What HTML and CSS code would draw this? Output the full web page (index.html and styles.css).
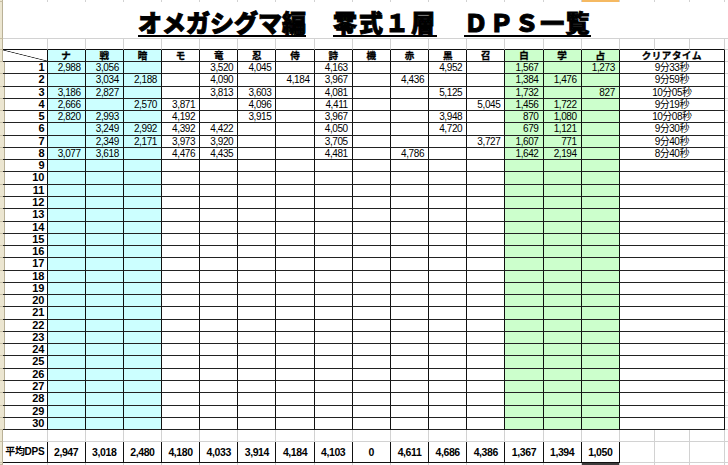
FILE: index.html
```html
<!DOCTYPE html>
<html lang="ja">
<head>
<meta charset="utf-8">
<title>オメガシグマ編 零式1層 DPS一覧</title>
<link rel="stylesheet" href="styles.css">
</head>
<body>
<div class="sheet">
  <div class="row top"><span class="hd"></span><span></span><span></span><span></span><span></span><span></span><span></span><span></span><span></span><span></span><span></span><span></span><span></span><span></span><span></span><span></span><span class="sel"></span><span></span><span></span><span></span><span class="fl"></span></div>
  <div class="row title"><span class="hd"></span><span class="tcell"><span class="tt">オメガシグマ編</span><span class="tt">零式１層</span><span class="tt">ＤＰＳ一覧</span></span></div>
  <div class="row blank"><span class="hd"></span><span></span><span></span><span></span><span></span><span></span><span></span><span></span><span></span><span></span><span></span><span></span><span></span><span></span><span></span><span></span><span></span><span></span><span></span><span></span><span class="fl"></span></div>
  <div class="row head"><span class="hd"></span><span class="diag"></span><span>ナ</span><span>戦</span><span>暗</span><span>モ</span><span>竜</span><span>忍</span><span>侍</span><span>詩</span><span>機</span><span>赤</span><span>黒</span><span>召</span><span>白</span><span>学</span><span>占</span><span class="ct">クリアタイム</span><span class="fl"></span></div>
  <div class="row d"><span class="hd"></span><span class="no">1</span><span>2,988</span><span>3,056</span><span></span><span></span><span>3,520</span><span>4,045</span><span></span><span>4,163</span><span></span><span></span><span>4,952</span><span></span><span>1,567</span><span></span><span>1,273</span><span class="ct">9分33秒</span><span class="fl"></span></div>
  <div class="row d t"><span class="hd"></span><span class="no">2</span><span></span><span>3,034</span><span>2,188</span><span></span><span>4,090</span><span></span><span>4,184</span><span>3,967</span><span></span><span>4,436</span><span></span><span></span><span>1,384</span><span>1,476</span><span></span><span class="ct">9分59秒</span><span class="fl"></span></div>
  <div class="row d"><span class="hd"></span><span class="no">3</span><span>3,186</span><span>2,827</span><span></span><span></span><span>3,813</span><span>3,603</span><span></span><span>4,081</span><span></span><span></span><span>5,125</span><span></span><span>1,732</span><span></span><span>827</span><span class="ct">10分05秒</span><span class="fl"></span></div>
  <div class="row d"><span class="hd"></span><span class="no">4</span><span>2,666</span><span></span><span>2,570</span><span>3,871</span><span></span><span>4,096</span><span></span><span>4,411</span><span></span><span></span><span></span><span>5,045</span><span>1,456</span><span>1,722</span><span></span><span class="ct">9分19秒</span><span class="fl"></span></div>
  <div class="row d"><span class="hd"></span><span class="no">5</span><span>2,820</span><span>2,993</span><span></span><span>4,192</span><span></span><span>3,915</span><span></span><span>3,967</span><span></span><span></span><span>3,948</span><span></span><span>870</span><span>1,080</span><span></span><span class="ct">10分08秒</span><span class="fl"></span></div>
  <div class="row d t"><span class="hd"></span><span class="no">6</span><span></span><span>3,249</span><span>2,992</span><span>4,392</span><span>4,422</span><span></span><span></span><span>4,050</span><span></span><span></span><span>4,720</span><span></span><span>679</span><span>1,121</span><span></span><span class="ct">9分30秒</span><span class="fl"></span></div>
  <div class="row d"><span class="hd"></span><span class="no">7</span><span></span><span>2,349</span><span>2,171</span><span>3,973</span><span>3,920</span><span></span><span></span><span>3,705</span><span></span><span></span><span></span><span>3,727</span><span>1,607</span><span>771</span><span></span><span class="ct">9分40秒</span><span class="fl"></span></div>
  <div class="row d"><span class="hd"></span><span class="no">8</span><span>3,077</span><span>3,618</span><span></span><span>4,476</span><span>4,435</span><span></span><span></span><span>4,481</span><span></span><span>4,786</span><span></span><span></span><span>1,642</span><span>2,194</span><span></span><span class="ct">8分40秒</span><span class="fl"></span></div>
  <div class="row d"><span class="hd"></span><span class="no">9</span><span></span><span></span><span></span><span></span><span></span><span></span><span></span><span></span><span></span><span></span><span></span><span></span><span></span><span></span><span></span><span class="ct"></span><span class="fl"></span></div>
  <div class="row d t"><span class="hd"></span><span class="no">10</span><span></span><span></span><span></span><span></span><span></span><span></span><span></span><span></span><span></span><span></span><span></span><span></span><span></span><span></span><span></span><span class="ct"></span><span class="fl"></span></div>
  <div class="row d"><span class="hd"></span><span class="no">11</span><span></span><span></span><span></span><span></span><span></span><span></span><span></span><span></span><span></span><span></span><span></span><span></span><span></span><span></span><span></span><span class="ct"></span><span class="fl"></span></div>
  <div class="row d"><span class="hd"></span><span class="no">12</span><span></span><span></span><span></span><span></span><span></span><span></span><span></span><span></span><span></span><span></span><span></span><span></span><span></span><span></span><span></span><span class="ct"></span><span class="fl"></span></div>
  <div class="row d t"><span class="hd"></span><span class="no">13</span><span></span><span></span><span></span><span></span><span></span><span></span><span></span><span></span><span></span><span></span><span></span><span></span><span></span><span></span><span></span><span class="ct"></span><span class="fl"></span></div>
  <div class="row d"><span class="hd"></span><span class="no">14</span><span></span><span></span><span></span><span></span><span></span><span></span><span></span><span></span><span></span><span></span><span></span><span></span><span></span><span></span><span></span><span class="ct"></span><span class="fl"></span></div>
  <div class="row d"><span class="hd"></span><span class="no">15</span><span></span><span></span><span></span><span></span><span></span><span></span><span></span><span></span><span></span><span></span><span></span><span></span><span></span><span></span><span></span><span class="ct"></span><span class="fl"></span></div>
  <div class="row d"><span class="hd"></span><span class="no">16</span><span></span><span></span><span></span><span></span><span></span><span></span><span></span><span></span><span></span><span></span><span></span><span></span><span></span><span></span><span></span><span class="ct"></span><span class="fl"></span></div>
  <div class="row d t"><span class="hd"></span><span class="no">17</span><span></span><span></span><span></span><span></span><span></span><span></span><span></span><span></span><span></span><span></span><span></span><span></span><span></span><span></span><span></span><span class="ct"></span><span class="fl"></span></div>
  <div class="row d"><span class="hd"></span><span class="no">18</span><span></span><span></span><span></span><span></span><span></span><span></span><span></span><span></span><span></span><span></span><span></span><span></span><span></span><span></span><span></span><span class="ct"></span><span class="fl"></span></div>
  <div class="row d"><span class="hd"></span><span class="no">19</span><span></span><span></span><span></span><span></span><span></span><span></span><span></span><span></span><span></span><span></span><span></span><span></span><span></span><span></span><span></span><span class="ct"></span><span class="fl"></span></div>
  <div class="row d"><span class="hd"></span><span class="no">20</span><span></span><span></span><span></span><span></span><span></span><span></span><span></span><span></span><span></span><span></span><span></span><span></span><span></span><span></span><span></span><span class="ct"></span><span class="fl"></span></div>
  <div class="row d t"><span class="hd"></span><span class="no">21</span><span></span><span></span><span></span><span></span><span></span><span></span><span></span><span></span><span></span><span></span><span></span><span></span><span></span><span></span><span></span><span class="ct"></span><span class="fl"></span></div>
  <div class="row d"><span class="hd"></span><span class="no">22</span><span></span><span></span><span></span><span></span><span></span><span></span><span></span><span></span><span></span><span></span><span></span><span></span><span></span><span></span><span></span><span class="ct"></span><span class="fl"></span></div>
  <div class="row d"><span class="hd"></span><span class="no">23</span><span></span><span></span><span></span><span></span><span></span><span></span><span></span><span></span><span></span><span></span><span></span><span></span><span></span><span></span><span></span><span class="ct"></span><span class="fl"></span></div>
  <div class="row d"><span class="hd"></span><span class="no">24</span><span></span><span></span><span></span><span></span><span></span><span></span><span></span><span></span><span></span><span></span><span></span><span></span><span></span><span></span><span></span><span class="ct"></span><span class="fl"></span></div>
  <div class="row d t"><span class="hd"></span><span class="no">25</span><span></span><span></span><span></span><span></span><span></span><span></span><span></span><span></span><span></span><span></span><span></span><span></span><span></span><span></span><span></span><span class="ct"></span><span class="fl"></span></div>
  <div class="row d"><span class="hd"></span><span class="no">26</span><span></span><span></span><span></span><span></span><span></span><span></span><span></span><span></span><span></span><span></span><span></span><span></span><span></span><span></span><span></span><span class="ct"></span><span class="fl"></span></div>
  <div class="row d"><span class="hd"></span><span class="no">27</span><span></span><span></span><span></span><span></span><span></span><span></span><span></span><span></span><span></span><span></span><span></span><span></span><span></span><span></span><span></span><span class="ct"></span><span class="fl"></span></div>
  <div class="row d t"><span class="hd"></span><span class="no">28</span><span></span><span></span><span></span><span></span><span></span><span></span><span></span><span></span><span></span><span></span><span></span><span></span><span></span><span></span><span></span><span class="ct"></span><span class="fl"></span></div>
  <div class="row d"><span class="hd"></span><span class="no">29</span><span></span><span></span><span></span><span></span><span></span><span></span><span></span><span></span><span></span><span></span><span></span><span></span><span></span><span></span><span></span><span class="ct"></span><span class="fl"></span></div>
  <div class="row d"><span class="hd"></span><span class="no">30</span><span></span><span></span><span></span><span></span><span></span><span></span><span></span><span></span><span></span><span></span><span></span><span></span><span></span><span></span><span></span><span class="ct"></span><span class="fl"></span></div>
  <div class="row gap"><span class="hd"></span><span></span><span></span><span></span><span></span><span></span><span></span><span></span><span></span><span></span><span></span><span></span><span></span><span></span><span></span><span></span><span></span><span></span><span></span><span></span><span class="fl"></span></div>
  <div class="row avg"><span class="hd"></span><span class="lbl">平均DPS</span><span>2,947</span><span>3,018</span><span>2,480</span><span>4,180</span><span>4,033</span><span>3,914</span><span>4,184</span><span>4,103</span><span>0</span><span>4,611</span><span>4,686</span><span>4,386</span><span>1,367</span><span>1,394</span><span>1,050</span><span class="g"></span><span class="g"></span><span class="g"></span><span class="fl"></span></div>
  <div class="row end"><span class="hd"></span><span></span><span></span><span></span><span></span><span></span><span></span><span></span><span></span><span></span><span></span><span></span><span></span><span></span><span></span><span></span><span class="sel2"></span><span></span><span></span><span></span><span class="fl"></span></div>
</div>
</body>
</html>
```

FILE: styles.css
```css
* { box-sizing: border-box; }
html, body { margin: 0; padding: 0; }
body {
  width: 728px;
  height: 465px;
  overflow: hidden;
  background: #fff;
  color: #000;
  font-family: "Liberation Sans", "Noto Sans CJK JP", sans-serif;
}
.sheet { display: flex; flex-direction: column; height: 465px; }
.row {
  display: grid;
  flex: none;
  grid-template-columns: 3px 44.5px repeat(15, 38.1667px) 35px 35px 35px 1fr;
  grid-template-rows: minmax(0, 1fr);
  overflow: visible;
}
.row > span {
  display: block;
  min-width: 0;
  min-height: 0;
  white-space: nowrap;
  border-right: 1px solid #d2d2d2;
  border-bottom: 1px solid #d2d2d2;
}
.row > .hd {
  background: #ece6d1;
  border-right: 1px solid #b9b197;
  border-bottom: 1px solid #c8bfa4;
}
.row > .fl { border-right: none; }

/* top strip */
.top { height: 2px; }
.top > span { border-bottom: none; }
.top > .sel { background: #f5b962; }

/* title */
.title { height: 37px; }
.title > .tcell {
  grid-column: 2 / -1;
  border-right: none;
  display: flex;
  justify-content: center;
  align-items: flex-end;
  gap: 27px;
  padding-bottom: 3px;
  padding-right: 2px;
}
.tt {
  font-family: "Noto Sans CJK JP", sans-serif;
  font-weight: 900;
  font-size: 24px;
  line-height: 27px;
  -webkit-text-stroke: 0.9px #000;
  text-decoration: underline;
  text-decoration-thickness: 2px;
  text-underline-offset: 3px;
}
.tt:nth-child(2) { letter-spacing: 2px; }
.tt:nth-child(3) { letter-spacing: 1.4px; }

/* blank row above header */
.blank { height: 11px; }
.blank > span:not(.hd):not(.fl) { border-bottom-color: #111; }

/* header + data rows */
.head { height: 12px; }
.d { height: 12px; }
.d.t { height: 13px; }
.head > span:not(.hd):not(.fl),
.d > span:not(.hd):not(.fl) {
  border-right-color: #111;
  border-bottom-color: #222;
}
.head > span:nth-child(n+3):nth-child(-n+5),
.d > span:nth-child(n+3):nth-child(-n+5) { background: #ccffff; }
.head > span:nth-child(n+15):nth-child(-n+17),
.d > span:nth-child(n+15):nth-child(-n+17) { background: #ccffcc; }
.head > .ct, .d > .ct { grid-column: span 3; text-align: center; }

.head > span {
  font-family: "Noto Sans CJK JP", sans-serif;
  font-weight: 700;
  font-size: 9.5px;
  line-height: 11px;
  text-align: center;
  -webkit-text-stroke: 0.3px #000;
}
.head > .ct { letter-spacing: 0.6px; }
.head > .diag {
  background: linear-gradient(to top right, transparent calc(50% - 0.7px), #222 50%, transparent calc(50% + 0.7px));
}

.d > span {
  font-size: 10px;
  line-height: 11px;
  letter-spacing: -0.4px;
  text-align: right;
  padding-right: 4px;
}
.d > .no {
  font-weight: 700;
  font-size: 11px;
  letter-spacing: 0;
  padding-right: 2px;
}
.d > .ct {
  text-align: center;
  padding-right: 0;
  letter-spacing: -0.5px;
  font-size: 10px;
}

/* gap row */
.gap { height: 12px; }

/* average row */
.avg { height: 21px; }
.avg > span:not(.hd):not(.fl):not(.g) {
  border-right-color: #111;
  border-bottom-color: #111;
  font-weight: 700;
  font-size: 10.5px;
  line-height: 20px;
  letter-spacing: -0.4px;
  text-align: center;
}
.avg > .lbl {
  font-size: 10px !important;
  letter-spacing: -0.3px !important;
}

/* end */
.end { flex: 1 1 auto; }
.end > span { border-bottom: none; }
.end > .sel2 { background: #3c3c3c; }
```
